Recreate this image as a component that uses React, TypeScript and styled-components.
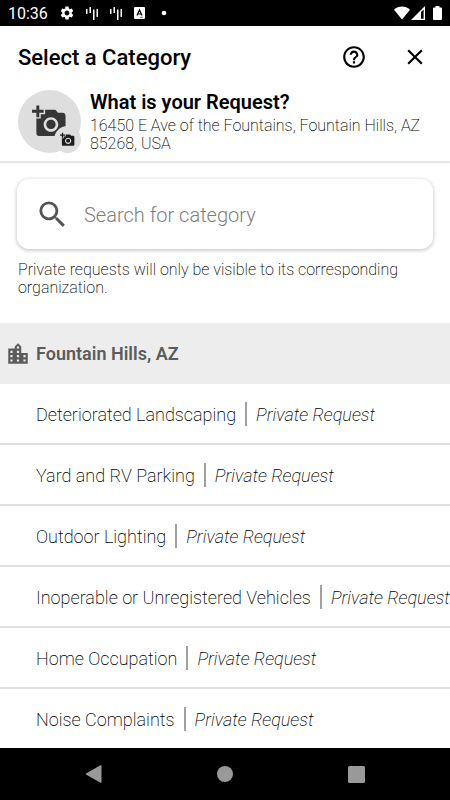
import React from "react";
import styled, { createGlobalStyle } from "styled-components";
import {
  MdAddAPhoto,
  MdClose,
  MdHelpOutline,
  MdLocationCity,
  MdSearch,
  MdSettings,
} from "react-icons/md";

const GlobalStyle = createGlobalStyle`
  *, *::before, *::after { box-sizing: border-box; }
  body {
    margin: 0;
    background: #fff;
    color: #000;
    font-family: Roboto, "Liberation Sans", sans-serif;
    overflow-x: hidden;
  }
  h1, h2, p, ul { margin: 0; padding: 0; }
  button, input { font: inherit; color: inherit; border: 0; background: none; padding: 0; }
  button { cursor: pointer; }
  svg { display: block; flex: none; }
`;

const Screen = styled.div`
  min-height: 100vh;
  display: flex;
  flex-direction: column;
`;

const StatusBar = styled.div`
  height: 26px;
  padding: 0 8px;
  display: flex;
  align-items: center;
  justify-content: space-between;
  background: #000;
  color: #fff;
`;

const StatusGroup = styled.div<{ $gap: number }>`
  display: flex;
  align-items: center;
  gap: ${(p) => p.$gap}px;
`;

const Clock = styled.span`
  font-size: 16px;
  line-height: 24px;
  padding-top: 2px;
`;

const Header = styled.header`
  border-bottom: 2px solid #e6e6e6;
  box-shadow: 0 2px 2px rgba(0, 0, 0, 0.02);
`;

const TitleRow = styled.div`
  height: 62px;
  padding: 0 22px 0 18px;
  display: flex;
  align-items: center;
  justify-content: space-between;
`;

const Title = styled.h1`
  font-size: 22px;
  line-height: 28px;
  padding-top: 2px;
  font-weight: 500;
`;

const Actions = styled.div`
  display: flex;
  align-items: center;
  gap: 35px;
`;

const IconButton = styled.button`
  display: flex;
`;

const RequestRow = styled.div`
  padding: 2px 18px 8px;
  display: flex;
  gap: 9px;
`;

const Avatar = styled.button`
  position: relative;
  flex: none;
  width: 63px;
  height: 63px;
  border-radius: 50%;
  background: #dedede;
  color: #363636;
  display: flex;
  align-items: center;
  justify-content: center;
`;

const AvatarBadge = styled.span`
  position: absolute;
  right: 0;
  bottom: 0;
  width: 27px;
  height: 27px;
  border-radius: 50%;
  background: #dedede;
  color: #1c1c1c;
  display: flex;
  align-items: center;
  justify-content: center;
`;

const RequestTitle = styled.h2`
  font-size: 20px;
  line-height: 24px;
  font-weight: 600;
`;

const Address = styled.p`
  font-size: 16px;
  line-height: 18px;
  margin-top: 3px;
  font-weight: 200;
`;

const SearchSection = styled.section`
  padding: 16px 17px 26px;
`;

const SearchBox = styled.label`
  height: 70px;
  padding: 0 20px 0 18px;
  display: flex;
  align-items: center;
  gap: 14px;
  border-radius: 12px;
  background: #fff;
  box-shadow: 0 1px 4px rgba(0, 0, 0, 0.28);
  color: #555;
`;

const SearchInput = styled.input`
  flex: 1;
  min-width: 0;
  font-size: 20px;
  line-height: 28px;
  padding-top: 2px;
  font-weight: 300;
  outline: none;
  &::placeholder {
    color: #808080;
    opacity: 1;
  }
`;

const Note = styled.p`
  margin: 12px 1px 0;
  font-size: 16px;
  line-height: 18px;
  font-weight: 200;
  color: #000;
`;

const GroupHeading = styled.h2`
  height: 61px;
  padding: 0 5px;
  display: flex;
  align-items: center;
  gap: 5px;
  background: #ededed;
  color: #5c5c5c;
  font-size: 18px;
  line-height: 24px;
  font-weight: 600;
`;

const CategoryList = styled.ul`
  list-style: none;
  flex: 1;
`;

const CategoryItem = styled.li`
  border-bottom: 2px solid #e0e0e0;
  overflow: hidden;
  &:last-child {
    border-bottom: 0;
  }
`;

const CategoryButton = styled.button`
  width: 100%;
  height: 59px;
  padding: 2px 0 0 36px;
  display: flex;
  align-items: center;
  white-space: nowrap;
  font-size: 18px;
  line-height: 24px;
  font-weight: 200;
  color: #000;
`;

const Visibility = styled.em`
  display: flex;
  align-items: center;
  &::before {
    content: "";
    width: 2px;
    height: 24px;
    margin: 0 9px 2px;
    background: #a0a0a0;
  }
`;

const NavBar = styled.nav`
  height: 52px;
  padding: 0 28px;
  display: flex;
  align-items: center;
  justify-content: space-around;
  background: #000;
  color: #999;
`;

const categories = [
  "Deteriorated Landscaping",
  "Yard and RV Parking",
  "Outdoor Lighting",
  "Inoperable or Unregistered Vehicles",
  "Home Occupation",
  "Noise Complaints",
];

const BarsIcon = () => (
  <svg width="13" height="14" viewBox="0 0 13 14" fill="#fff">
    <path d="M0 3h1.5v5H0zM3.5 1H5v6H3.5zM7 3.5h1.5V14H7zM10.5 3H12v8h-1.5z" />
  </svg>
);

const KeyboardIcon = () => (
  <svg width="11" height="12" viewBox="0 0 11 12">
    <rect width="11" height="12" rx="1" fill="#fff" />
    <path d="M3 8.5 5.5 3 8 8.5M4 7h3" fill="none" stroke="#000" strokeWidth="1.2" />
    <path d="M6 10.3h3" stroke="#777" />
  </svg>
);

const DotIcon = () => (
  <svg width="6" height="6" viewBox="0 0 6 6">
    <circle cx="3" cy="3" r="2.3" fill="#fff" />
  </svg>
);

const WifiIcon = () => (
  <svg width="16" height="14" viewBox="0 0 17 14">
    <path d="M0 3.6C5-1 12-1 17 3.6L8.5 14z" fill="#fff" />
  </svg>
);

const SignalIcon = () => (
  <svg width="14" height="14" viewBox="0 0 14 14">
    <path d="M0 14 14 0v14z" fill="#fff" />
    <path d="M10 6 12.6 3.6V12.7H10z" fill="#000" />
  </svg>
);

const BatteryIcon = () => (
  <svg width="9" height="14" viewBox="0 0 9 14">
    <path d="M2.5 0h4v1.5H8q1 0 1 1V13q0 1-1 1H1q-1 0-1-1V2.5q0-1 1-1h1.5z" fill="#fff" />
  </svg>
);

export default function App() {
  return (
    <Screen>
      <GlobalStyle />
      <StatusBar>
        <StatusGroup $gap={16}>
          <StatusGroup $gap={11}>
            <Clock>10:36</Clock>
            <MdSettings size={16} />
            <BarsIcon />
            <BarsIcon />
            <KeyboardIcon />
          </StatusGroup>
          <DotIcon />
        </StatusGroup>
        <StatusGroup $gap={8}>
          <StatusGroup $gap={1}>
            <WifiIcon />
            <SignalIcon />
          </StatusGroup>
          <BatteryIcon />
        </StatusGroup>
      </StatusBar>
      <Header>
        <TitleRow>
          <Title>Select a Category</Title>
          <Actions>
            <IconButton aria-label="Help">
              <MdHelpOutline size={26} />
            </IconButton>
            <IconButton aria-label="Close">
              <MdClose size={26} />
            </IconButton>
          </Actions>
        </TitleRow>
        <RequestRow>
          <Avatar aria-label="Add a photo">
            <MdAddAPhoto size={35} />
            <AvatarBadge>
              <MdAddAPhoto size={15} />
            </AvatarBadge>
          </Avatar>
          <div>
            <RequestTitle>What is your Request?</RequestTitle>
            <Address>16450 E Ave of the Fountains, Fountain Hills, AZ 85268, USA</Address>
          </div>
        </RequestRow>
      </Header>
      <SearchSection>
        <SearchBox>
          <MdSearch size={35} />
          <SearchInput
            type="text"
            placeholder="Search for category"
            aria-label="Search for category"
          />
        </SearchBox>
        <Note>Private requests will only be visible to its corresponding organization.</Note>
      </SearchSection>
      <GroupHeading>
        <MdLocationCity size={26} />
        Fountain Hills, AZ
      </GroupHeading>
      <CategoryList>
        {categories.map((name) => (
          <CategoryItem key={name}>
            <CategoryButton>
              {name}
              <Visibility>Private Request</Visibility>
            </CategoryButton>
          </CategoryItem>
        ))}
      </CategoryList>
      <NavBar>
        <IconButton aria-label="Back">
          <svg width="18" height="18" viewBox="0 0 18 18" fill="currentColor">
            <path d="M1.4 8.2 15.5.3q1-.5 1 .6v16.2q0 1.1-1 .6L1.4 9.8Q.2 9 1.4 8.2z" />
          </svg>
        </IconButton>
        <IconButton aria-label="Home">
          <svg width="16" height="16" viewBox="0 0 16 16" fill="currentColor">
            <circle cx="8" cy="8" r="8" />
          </svg>
        </IconButton>
        <IconButton aria-label="Recent apps">
          <svg width="17" height="17" viewBox="0 0 17 17" fill="currentColor">
            <rect width="17" height="17" rx="1.5" />
          </svg>
        </IconButton>
      </NavBar>
    </Screen>
  );
}
